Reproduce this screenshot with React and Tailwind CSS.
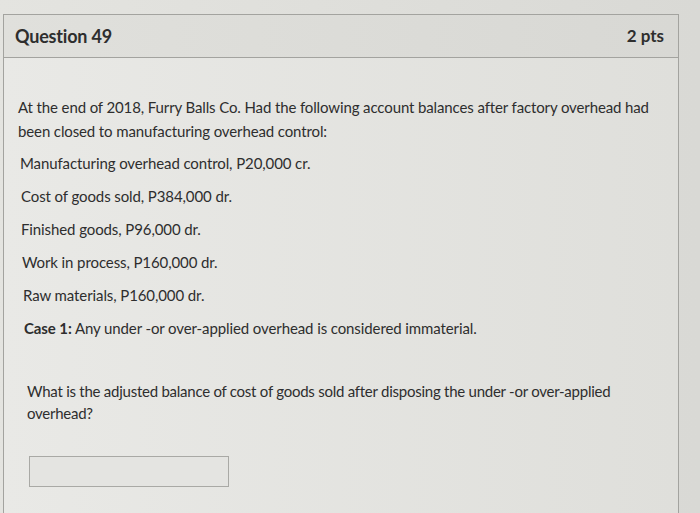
import React from 'react';

const items = [
  { text: 'Manufacturing overhead control, P20,000 cr.', ml: 'ml-[16px]' },
  { text: 'Cost of goods sold, P384,000 dr.', ml: 'ml-[17px]' },
  { text: 'Finished goods, P96,000 dr.', ml: 'ml-[17px]' },
  { text: 'Work in process, P160,000 dr.', ml: 'ml-[18px]' },
  { text: 'Raw materials, P160,000 dr.', ml: 'ml-[19px]' },
];

export default function App() {
  return (
    <div
      className="w-[700px] h-[513px] overflow-hidden bg-gradient-to-r from-[#e4e4e0] to-[#d9d9d5] pt-[14px] text-[#2e2e2e]"
      style={{ fontFamily: 'Lato, "Open Sans", sans-serif' }}
    >
      <div className="ml-[3px] w-[676px] h-[520px] border border-[#a3a39f] border-b-0 bg-gradient-to-r from-[#e9e9e6] to-[#dfdfdb]">
        {/* Header */}
        <div className="h-[43px] flex items-center justify-between pl-[11px] pr-[14px] border-b border-[#a3a39f] bg-gradient-to-r from-[#e0e0dc] to-[#d8d8d4]">
          <h2 className="text-[18px] font-bold tracking-[-0.2px]">Question 49</h2>
          <span className="text-[17px] font-bold">2 pts</span>
        </div>

        {/* Body */}
        <div className="pt-[37px]">
          <p className="ml-[14px] mr-[8px] text-[15px] leading-[24px] tracking-[-0.12px]">
            At the end of 2018, Furry Balls Co. Had the following account balances after factory overhead had been closed to manufacturing overhead control:
          </p>
          <div className="mt-[8px] flex flex-col gap-[9px]">
            {items.map((it) => (
              <p key={it.text} className={`${it.ml} text-[15px] leading-[24px] tracking-[-0.1px]`}>{it.text}</p>
            ))}
            <p className="ml-[20px] text-[15px] leading-[24px] tracking-[-0.1px]">
              <span className="font-bold">Case 1:</span> Any under -or over-applied overhead is considered immaterial.
            </p>
          </div>

          <p className="ml-[23px] mt-[40px] w-[620px] text-[15px] leading-[22px] tracking-[-0.25px]">
            What is the adjusted balance of cost of goods sold after disposing the under -or over-applied overhead?
          </p>

          <div className="ml-[25px] mt-[32px] w-[200px] h-[31px] border border-[#a9a9a5] bg-[#e4e4e1]" />
        </div>
      </div>
    </div>
  );
}
